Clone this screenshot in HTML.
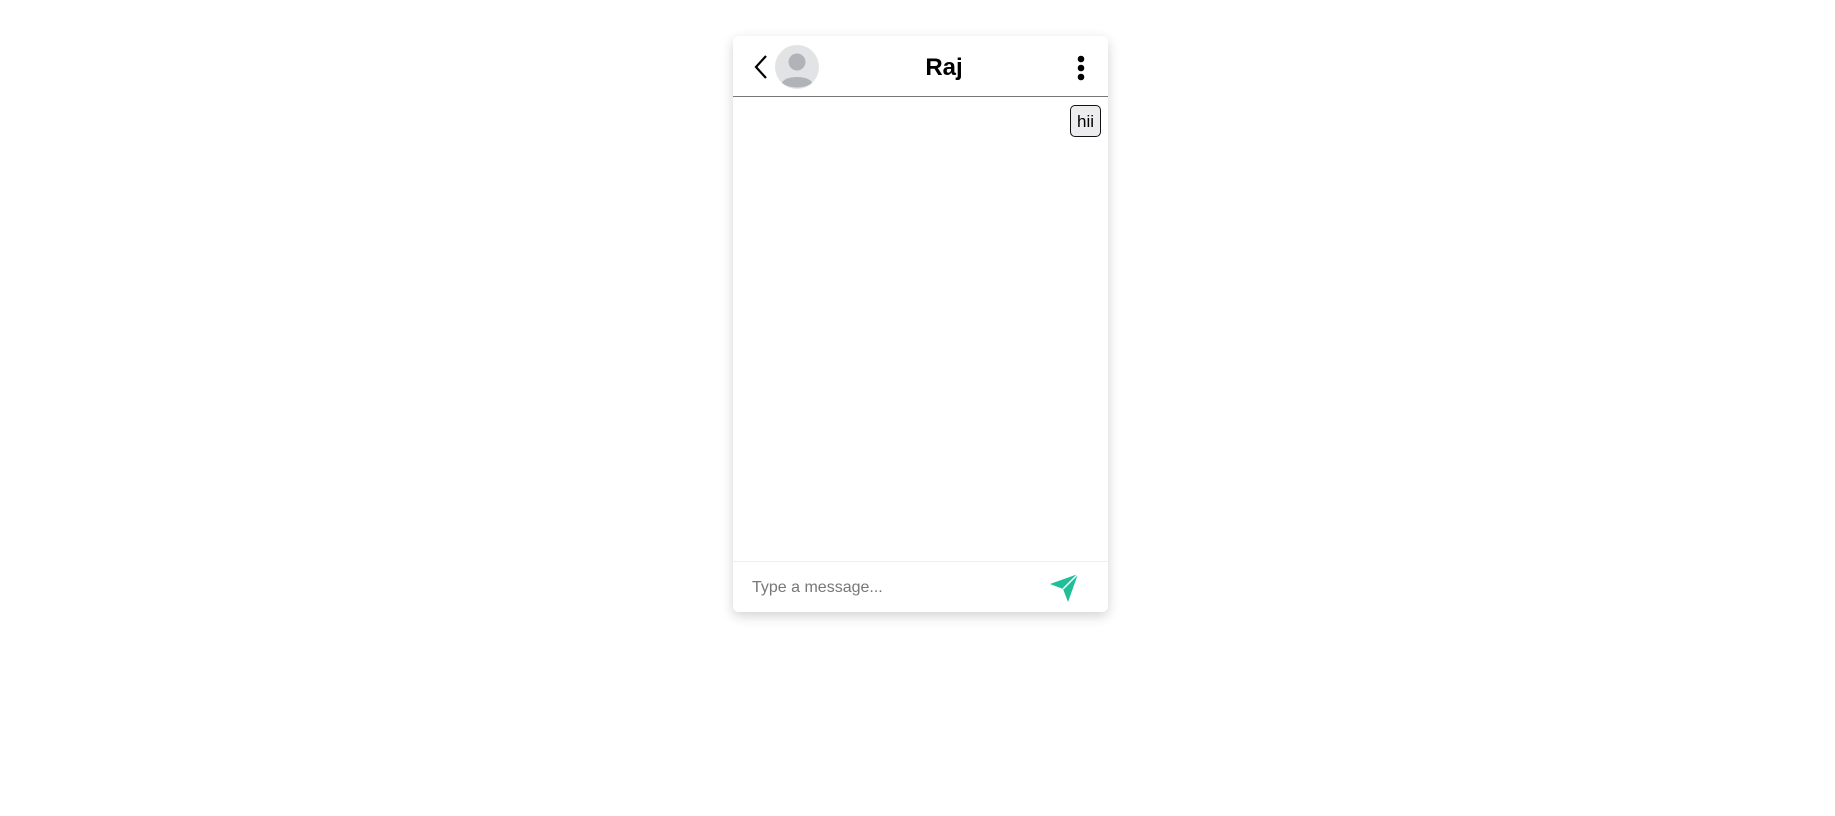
<!DOCTYPE html>
<html><head><style>
body{margin:0;width:1835px;height:816px;background:#fff;position:relative;font-family:"Liberation Sans",Arial,sans-serif;overflow:hidden}
.card{position:absolute;left:733px;top:36px;width:375px;height:576px;background:#fff;border-radius:6px;box-shadow:0 4px 12px rgba(0,0,0,.18);overflow:hidden}
.hdr{position:absolute;left:0;top:0;width:375px;height:60px;border-bottom:1px solid #777}
.title{position:absolute;left:111px;width:200px;top:18px;text-align:center;font-weight:bold;font-size:24px;color:#000}
.bubble{position:absolute;left:337px;top:69px;width:31px;height:32px;border:1px solid #111;border-radius:5px;background:#ececef;font-size:17px;line-height:31px;text-align:center;color:#000;box-sizing:border-box}
.inp{position:absolute;left:0;top:525px;width:375px;height:51px;border-top:1px solid #eee;background:#fff}
.ph{position:absolute;left:19px;top:17px;font-size:16px;color:#777}
</style></head><body>
<div class="card">
<div class="hdr">
<svg style="position:absolute;left:20px;top:18px" width="16" height="26" viewBox="0 0 16 26"><path d="M13 2 L3 13 L13 24" fill="none" stroke="#000" stroke-width="2.2"/></svg>
<svg style="position:absolute;left:42px;top:9px" width="44" height="44" viewBox="0 0 44 44"><circle cx="22" cy="22" r="22" fill="#e2e3e5"/><circle cx="22" cy="17" r="8.5" fill="#b0b4b8"/><path d="M7 38 C9 30 35 30 37 38 C30 44 14 44 7 38Z" fill="#b0b4b8"/></svg>
<div class="title">Raj</div>
<svg style="position:absolute;left:341px;top:19px" width="14" height="26" viewBox="0 0 14 26"><circle cx="7" cy="4" r="3.3"/><circle cx="7" cy="13" r="3.3"/><circle cx="7" cy="22" r="3.3"/></svg>
</div>
<div class="bubble">hii</div>
<div class="inp"><div class="ph">Type a message...</div>
<svg style="position:absolute;left:316px;top:11px" width="30" height="30" viewBox="0 0 30 30"><path d="M1 11 L29 1 L19 29 L14 16 Z" fill="#1fbf98"/><path d="M14 16 L29 1" stroke="#fff" stroke-width="1.5"/></svg>
</div>
</div>
</body></html>
